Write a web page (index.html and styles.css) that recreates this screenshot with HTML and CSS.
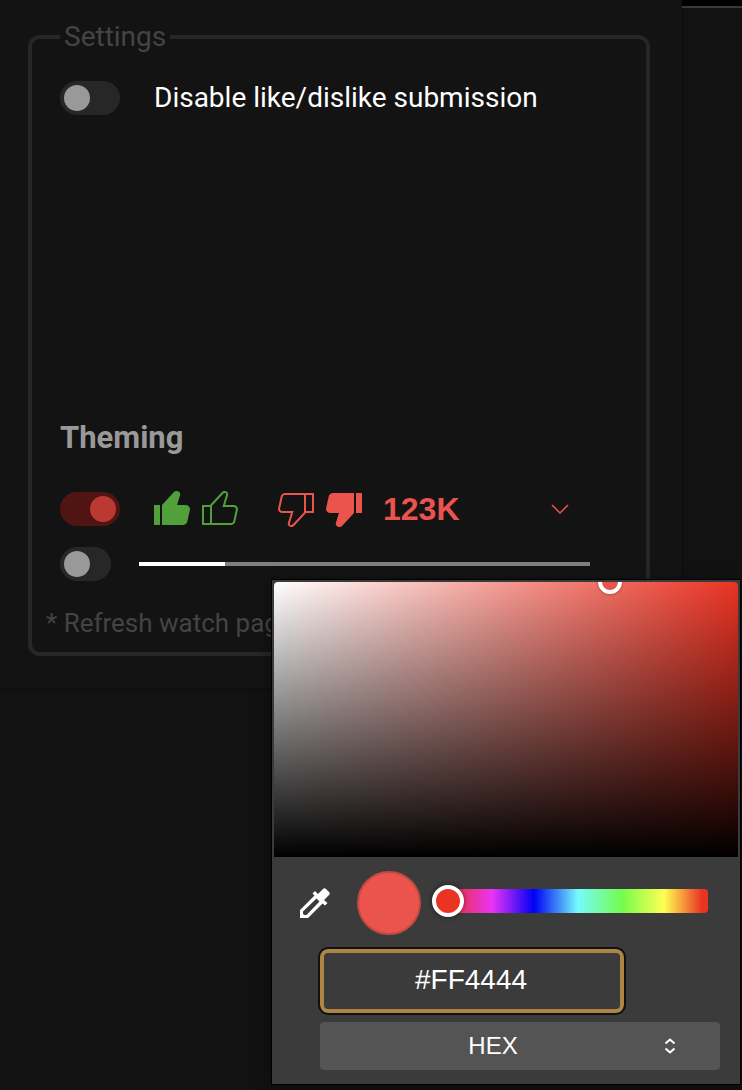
FILE: index.html
```html
<!DOCTYPE html>
<html lang="en">
<head>
<meta charset="utf-8">
<title>Settings</title>
<link rel="stylesheet" href="styles.css">
</head>
<body>
<div class="page">
  <main class="panel">
    <fieldset class="settings">
      <legend class="settings-legend">Settings</legend>
      <div class="section options">
        <div class="row">
          <input class="toggle" type="checkbox" id="disable-submission">
          <label class="row-label" for="disable-submission">Disable like/dislike submission</label>
        </div>
      </div>
      <div class="section">
        <h2 class="heading">Theming</h2>
        <div class="row theme-row">
          <input class="toggle" type="checkbox" id="theme-colors" aria-label="Colored thumbs" checked>
          <button class="theme-button" type="button" aria-label="Choose thumb colors, 123K">
            <span class="likes">
              <svg class="thumb" viewBox="0 0 24 24"><path d="M3,11h3v10H3V11z M18.77,11h-4.23l1.52-4.94C16.38,5.03,15.54,4,14.38,4c-0.58,0-1.14,0.24-1.52,0.65L7,11v10h10.43c1.06,0,1.98-0.67,2.19-1.61l1.34-6C21.23,12.15,20.18,11,18.77,11z"/></svg>
              <svg class="thumb" viewBox="0 0 24 24"><path d="M18.77,11h-4.23l1.52-4.94C16.38,5.03,15.54,4,14.38,4c-0.58,0-1.14,0.24-1.52,0.65L7,11H3v10h4h1h9.43c1.06,0,1.98-0.67,2.19-1.61l1.34-6C21.23,12.15,20.18,11,18.77,11z M7,20H4v-8h3V20z M19.98,13.17l-1.34,6C18.54,19.65,18.03,20,17.43,20H8v-8.61l5.6-6.06C13.79,5.12,14.08,5,14.38,5c0.26,0,0.5,0.11,0.63,0.3c0.07,0.1,0.15,0.26,0.09,0.47l-1.52,4.94L13.18,12h1.35h4.23c0.41,0,0.8,0.17,1.03,0.46C19.92,12.61,20.05,12.86,19.98,13.17z"/></svg>
            </span>
            <span class="dislikes">
              <svg class="thumb" viewBox="0 0 24 24"><path d="M17,4h-1H6.57C5.5,4,4.59,4.67,4.38,5.61l-1.34,6C2.77,12.85,3.82,14,5.23,14h4.23l-1.52,4.94C7.62,19.97,8.46,21,9.62,21c0.58,0,1.14-0.24,1.52-0.65L17,14h4V4H17z M10.4,19.67C10.21,19.88,9.92,20,9.62,20c-0.26,0-0.5-0.11-0.63-0.3c-0.07-0.1-0.15-0.26-0.09-0.47l1.52-4.94l0.4-1.29H9.46H5.23c-0.41,0-0.8-0.17-1.03-0.46c-0.12-0.15-0.25-0.4-0.18-0.72l1.34-6C5.46,5.35,5.97,5,6.57,5H16v8.61L10.4,19.67z M20,13h-3V5h3V13z"/></svg>
              <svg class="thumb" viewBox="0 0 24 24"><path d="M18,4h3v10h-3V4z M5.23,14h4.23l-1.52,4.94C7.62,19.97,8.46,21,9.62,21c0.58,0,1.14-0.24,1.52-0.65L17,14V4H6.57C5.5,4,4.59,4.67,4.38,5.61l-1.34,6C2.77,12.85,3.82,14,5.23,14z"/></svg>
            </span>
            <span class="count">123K</span>
            <svg class="chevron" viewBox="0 0 24 24"><path d="M4 8l8 8 8-8"/></svg>
          </button>
        </div>
        <div class="row bar-row">
          <input class="toggle toggle-narrow" type="checkbox" id="ratio-bar" aria-label="Colored ratio bar">
          <input class="ratio-bar" type="range" min="0" max="100" value="19" aria-label="Like ratio">
        </div>
      </div>
      <p class="note">* Refresh watch page</p>
    </fieldset>
  </main>
  <aside class="strip"></aside>

  <div class="picker" role="dialog" aria-label="Color picker">
    <div class="shade"><span class="shade-thumb"></span></div>
    <div class="picker-tools">
      <button class="dropper" type="button" aria-label="Pick a color from the screen">
        <svg class="dropper-icon" viewBox="0 0 30 30"><path fill-rule="evenodd" d="M0 30V22L14.5 7.500L12.500 5.500L15 3L18 6L23 1Q24.500-.5 26 1L29 4Q30.500 5.500 29 7L24 12L27.500 15L25 17.500L22.500 15.500L8 30ZM3 23.500V26L4.500 27H6.500L19.500 13.500L16.500 10.500Z"/></svg>
      </button>
      <span class="swatch"></span>
      <input class="hue" type="range" min="0" max="360" value="0" aria-label="Hue">
    </div>
    <div class="picker-fields">
      <input class="hex" type="text" value="#FF4444" aria-label="Hex value">
      <div class="format-wrap">
        <select class="format" aria-label="Color format"><option>HEX</option></select>
        <svg class="format-icon" viewBox="0 0 12 16"><path d="M1.500 5.500L6 1.500l4.500 4M1.500 10.500L6 14.500l4.500-4"/></svg>
      </div>
    </div>
  </div>
</div>
</body>
</html>
```

FILE: styles.css
```css
* {
  box-sizing: border-box;
}

body {
  margin: 0;
  background: #121212;
  color: #fff;
  font-family: Roboto, "Liberation Sans", sans-serif;
}

button,
input,
select {
  margin: 0;
  font: inherit;
  color: inherit;
}

.page {
  position: relative;
  display: flex;
  align-items: flex-start;
  min-height: 100vh;
}

.panel {
  flex: 1;
  min-width: 0;
  padding: 21px 32px 32px 28px;
  background: #131313;
  box-shadow: 0 0 4px #0c0c0c;
}

.strip {
  width: 60px;
  height: 8px;
  background: #000;
  border-bottom: 2px solid #3a3a3a;
}

.settings {
  min-width: 0;
  margin: 0;
  padding: 28px 14px 13px;
  border: 4px solid #272727;
  border-radius: 12px;
}

.settings-legend {
  margin-left: 14px;
  padding: 0 4px;
  color: #444;
  font-size: 28px;
  line-height: 32px;
}

.section {
  padding: 0 14px;
}

.options {
  min-height: 340px;
}

.row {
  display: flex;
  align-items: center;
}

.row-label {
  padding-left: 34px;
  font-size: 28px;
  line-height: 34px;
}

.toggle {
  position: relative;
  flex: none;
  width: 60px;
  height: 34px;
  appearance: none;
  border-radius: 17px;
  background: #272727;
}

.toggle::before {
  content: "";
  position: absolute;
  top: 4px;
  left: 4px;
  width: 26px;
  height: 26px;
  border-radius: 50%;
  background: #999;
}

.toggle:checked {
  background: #501513;
}

.toggle:checked::before {
  left: 30px;
  background: #bc3931;
}

.toggle-narrow {
  width: 51px;
}

.heading {
  margin: 0 0 28px;
  color: #999;
  font-size: 31px;
  font-weight: 700;
  line-height: 34px;
}

.theme-row {
  gap: 28px;
}

.theme-button {
  display: flex;
  flex: 1;
  align-items: center;
  height: 52px;
  padding: 0 46px 0 0;
  border: 0;
  background: none;
  color: #eb544c;
}

.likes,
.dislikes {
  display: flex;
  align-self: flex-start;
  fill: #52a03b;
}

.dislikes {
  margin-left: 28px;
  padding-top: 2px;
  fill: #eb544c;
}

.thumb {
  width: 48px;
  height: 48px;
}

.count {
  margin-left: 15px;
  font-family: "Liberation Sans", Arial, sans-serif;
  font-size: 32px;
  font-weight: 700;
  line-height: 36px;
}

.chevron {
  width: 24px;
  height: 24px;
  margin-left: auto;
  fill: none;
  stroke: #eb544c;
  stroke-width: 1.5;
}

.bar-row {
  gap: 28px;
  margin-top: 12px;
  padding-right: 28px;
}

.ratio-bar {
  flex: 1;
  min-width: 0;
  height: 4px;
  appearance: none;
  background: linear-gradient(to right, #fff 19%, #808080 19%);
}

.ratio-bar::-webkit-slider-thumb {
  width: 1px;
  height: 4px;
  appearance: none;
}

.note {
  margin: 26px 0 0;
  color: #444;
  font-size: 26px;
  line-height: 32px;
}

.picker {
  position: absolute;
  top: 579px;
  right: 1px;
  width: 470px;
  padding: 2px 2px 14px;
  border: 1px solid #000;
  background: #3b3b3b;
  box-shadow: 0 4px 16px #0006;
}

.shade {
  position: relative;
  height: 275px;
  overflow: hidden;
  border-radius: 4px 4px 0 0;
  background:
    linear-gradient(to top, #000, transparent),
    linear-gradient(to right, #fff, #ea3323);
}

.shade-thumb {
  position: absolute;
  top: -12px;
  left: 324px;
  width: 24px;
  height: 24px;
  border: 4px solid #fff;
  border-radius: 50%;
  background: #eb544c;
  box-shadow: 0 0 3px #0006;
}

.picker-tools {
  display: flex;
  align-items: center;
  padding: 14px 30px 0 26px;
}

.dropper {
  display: flex;
  padding: 0;
  border: 0;
  background: none;
}

.dropper-icon {
  width: 30px;
  height: 30px;
  fill: #fff;
}

.swatch {
  width: 64px;
  height: 64px;
  margin: 0 11px 0 27px;
  border: 2px solid #c24943;
  border-radius: 50%;
  background: #eb544c;
}

.hue {
  flex: 1;
  min-width: 0;
  height: 32px;
  margin-bottom: 4px;
  appearance: none;
  background: none;
}

.hue::-webkit-slider-runnable-track {
  height: 24px;
  border-radius: 4px;
  background: linear-gradient(to right, transparent 16px, #ea3323 16px, #ea33f7 60px, #0000f5 102px, #75fbfd 146px, #75fb4c 190px, #ffff54 232px, #ea3323 270px);
}

.hue::-webkit-slider-thumb {
  width: 32px;
  height: 32px;
  margin-top: -4px;
  appearance: none;
  border: 4px solid #fff;
  border-radius: 50%;
  background: #ea3323;
  box-shadow: 0 0 5px #0008;
}

.picker-fields {
  display: flex;
  flex-direction: column;
  gap: 9px;
  padding: 14px 18px 0 46px;
}

.hex {
  width: 304px;
  height: 64px;
  padding: 0 2px 2px 0;
  border: 4px solid #ae8544;
  border-radius: 8px;
  outline: 2px solid #111;
  background: #3b3b3b;
  font-family: "Liberation Sans", Arial, sans-serif;
  font-size: 28px;
  text-align: center;
}

.format-wrap {
  position: relative;
}

.format {
  display: block;
  width: 100%;
  height: 48px;
  padding: 0 54px 2px 0;
  appearance: none;
  border: 0;
  border-radius: 4px;
  background: #545454;
  font-family: "Liberation Sans", Arial, sans-serif;
  font-size: 24px;
  text-align: center;
  text-align-last: center;
}

.format-icon {
  position: absolute;
  top: 16px;
  right: 44px;
  width: 12px;
  height: 16px;
  fill: none;
  stroke: #fff;
  stroke-width: 2;
  pointer-events: none;
}
```
